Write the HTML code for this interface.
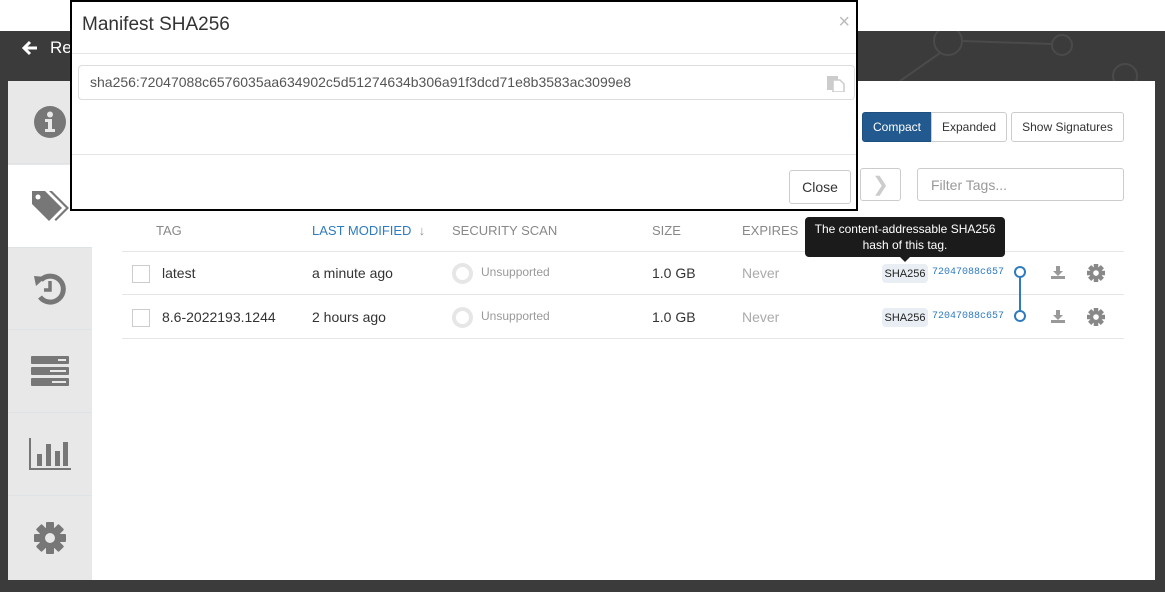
<!DOCTYPE html>
<html><head><style>
*{box-sizing:border-box;margin:0;padding:0}
body{width:1165px;height:592px;overflow:hidden;position:relative;background:#fff;font-family:"Liberation Sans",sans-serif;color:#333}
.abs{position:absolute}
.dark{left:0;top:31px;width:1165px;height:561px;background:#3b3b3b}
.panel{left:8px;top:81px;width:1147px;height:499px;background:#fff}
.side{left:8px;top:81px;width:84px;height:499px;background:#e8e8e8}
.tab{position:absolute;left:0;width:84px;height:83px;border-bottom:1px solid #dfe3e6;display:flex;align-items:center;justify-content:center}
.btn{position:absolute;border:1px solid #ccc;border-radius:3px;background:#fff;font-size:12px;display:flex;align-items:center;justify-content:center;color:#333}
.th{position:absolute;top:223px;font-size:13px;color:#888}
.row{position:absolute;font-size:14px}
.cb{position:absolute;width:18px;height:18px;border:1px solid #ccc;background:#fff}
.line{position:absolute;left:122px;width:1002px;height:1px;background:#e6e6e6}
.sha{position:absolute;left:882px;width:46px;height:19px;background:#e8eef3;border-radius:4px;font-size:11px;display:flex;align-items:center;justify-content:center;color:#222}
.hash{position:absolute;left:932px;font-family:"Liberation Mono",monospace;font-size:10px;color:#2f7bbf}
.scan{position:absolute;left:452px;width:21px;height:21px;border-radius:50%;border:4px solid #e6e6e6}
</style></head><body>
<div class="abs dark"></div>
<svg class="abs" style="left:880px;top:31px" width="285" height="60"><g fill="none" stroke="#4a4a4a" stroke-width="2"><circle cx="68" cy="10" r="14"/><circle cx="182" cy="14" r="10"/><line x1="82" y1="10" x2="172" y2="13"/><line x1="60" y1="22" x2="20" y2="50"/><circle cx="245" cy="45" r="12"/></g></svg>
<svg class="abs" style="left:22px;top:40px" width="16" height="16" viewBox="0 0 16 16"><path d="M8 2 2 8l6 6M2 8h13" stroke="#fff" stroke-width="3" fill="none"/></svg>
<div class="abs" style="left:50px;top:38px;color:#fff;font-size:17px">Re</div>
<div class="abs panel"></div>
<div class="abs side">
 <div class="tab" style="top:0"><svg width="32" height="32" viewBox="0 0 32 32"><circle cx="16" cy="16" r="16" fill="#777"/><circle cx="16" cy="8.5" r="3" fill="#e8e8e8"/><path d="M11 13h7v10h3v3H11v-3h3v-7h-3z" fill="#e8e8e8"/></svg></div>
 <div class="tab" style="top:84px;background:#fff"><svg width="40" height="34" viewBox="0 0 40 34"><path d="M2 2h13l17 17-13 13L2 15z" fill="#777"/><circle cx="8" cy="8" r="2.5" fill="#fff"/><path d="M19 2h3l17 17-13 13-1.5-1.5 11.5-11.5z" fill="#777"/></svg></div>
 <div class="tab" style="top:166px"><svg width="34" height="34" viewBox="0 0 34 34"><path d="M8 9A13 13 0 1 1 7 26" stroke="#777" stroke-width="5" fill="none"/><path d="M1 5l12 1-10 9z" fill="#777"/><path d="M17 10v9h-6" stroke="#777" stroke-width="3.5" fill="none"/></svg></div>
 <div class="tab" style="top:249px"><svg width="38" height="30" viewBox="0 0 38 30"><rect x="0" y="0" width="38" height="8" rx="1" fill="#777"/><rect x="0" y="11" width="38" height="8" rx="1" fill="#777"/><rect x="0" y="22" width="38" height="8" rx="1" fill="#777"/><rect x="27" y="3" width="8" height="2" fill="#e8e8e8"/><rect x="19" y="14" width="16" height="2" fill="#e8e8e8"/><rect x="21" y="25" width="14" height="2" fill="#e8e8e8"/></svg></div>
 <div class="tab" style="top:332px"><svg width="42" height="32" viewBox="0 0 42 32"><path d="M1 0v31h41" stroke="#777" stroke-width="2" fill="none"/><rect x="8" y="16" width="5" height="12" fill="#777"/><rect x="17" y="6" width="5" height="22" fill="#777"/><rect x="26" y="13" width="5" height="15" fill="#777"/><rect x="34" y="4" width="5" height="24" fill="#777"/></svg></div>
 <div class="tab" style="top:415px;border:none"><svg width="32" height="32" viewBox="-16 -16 32 32"><g fill="#777"><circle r="11"/><rect x="-4" y="-16" width="8" height="32" rx="1"/><rect x="-4" y="-16" width="8" height="32" rx="1" transform="rotate(45)"/><rect x="-4" y="-16" width="8" height="32" rx="1" transform="rotate(90)"/><rect x="-4" y="-16" width="8" height="32" rx="1" transform="rotate(135)"/></g><circle r="5" fill="#e8e8e8"/></svg></div>
</div>
<div class="btn" style="left:862px;top:112px;width:70px;height:30px;background:#22598f;border-color:#1d4f80;color:#fff;border-radius:3px 0 0 3px">Compact</div>
<div class="btn" style="left:931px;top:112px;width:76px;height:30px;border-radius:0 3px 3px 0">Expanded</div>
<div class="btn" style="left:1011px;top:112px;width:113px;height:30px">Show Signatures</div>
<div class="btn" style="left:860px;top:168px;width:41px;height:33px;color:#ccc;font-size:20px">&#x276F;</div>
<div class="btn" style="left:917px;top:168px;width:207px;height:33px;justify-content:flex-start;padding-left:13px;color:#999;font-size:14px">Filter Tags...</div>
<div class="th" style="left:156px">TAG</div>
<div class="th" style="left:312px;color:#2f7bbf">LAST MODIFIED &nbsp;<span style="color:#999">↓</span></div>
<div class="th" style="left:452px">SECURITY SCAN</div>
<div class="th" style="left:652px">SIZE</div>
<div class="th" style="left:742px">EXPIRES</div>
<div class="line" style="top:251px"></div>
<div class="line" style="top:294px"></div>
<div class="line" style="top:338px"></div>
<div class="cb" style="left:132px;top:265px"></div>
<div class="cb" style="left:132px;top:309px"></div>
<div class="row" style="left:162px;top:265px">latest</div>
<div class="row" style="left:162px;top:309px">8.6-2022193.1244</div>
<div class="row" style="left:312px;top:265px">a minute ago</div>
<div class="row" style="left:312px;top:309px">2 hours ago</div>
<div class="scan" style="top:263px"></div><div class="scan" style="top:307px"></div>
<div class="row" style="left:481px;top:265px;font-size:12px;color:#999">Unsupported</div>
<div class="row" style="left:481px;top:309px;font-size:12px;color:#999">Unsupported</div>
<div class="row" style="left:652px;top:265px">1.0 GB</div>
<div class="row" style="left:652px;top:309px">1.0 GB</div>
<div class="row" style="left:742px;top:265px;color:#aaa">Never</div>
<div class="row" style="left:742px;top:309px;color:#aaa">Never</div>
<div class="sha" style="top:264px">SHA256</div><div class="sha" style="top:308px">SHA256</div>
<div class="hash" style="top:267px">72047088c657</div><div class="hash" style="top:311px">72047088c657</div>
<svg class="abs" style="left:1010px;top:264px" width="20" height="60"><line x1="10" y1="8" x2="10" y2="52" stroke="#2f7bbf" stroke-width="2"/><circle cx="10" cy="8" r="5" fill="#fff" stroke="#2f7bbf" stroke-width="2"/><circle cx="10" cy="52" r="5" fill="#fff" stroke="#2f7bbf" stroke-width="2"/></svg>
<svg class="abs" style="left:1051px;top:265px" width="14" height="14" viewBox="0 0 14 14"><path d="M5 1h4v5h3L7 11 2 6h3z" fill="#999"/><rect x="0" y="11" width="14" height="3" fill="#999"/></svg>
<svg class="abs" style="left:1051px;top:309px" width="14" height="14" viewBox="0 0 14 14"><path d="M5 1h4v5h3L7 11 2 6h3z" fill="#999"/><rect x="0" y="11" width="14" height="3" fill="#999"/></svg>
<svg class="abs" style="left:1087px;top:264px" width="18" height="18" viewBox="-16 -16 32 32"><g fill="#888"><circle r="11"/><rect x="-4" y="-16" width="8" height="32"/><rect x="-4" y="-16" width="8" height="32" transform="rotate(45)"/><rect x="-4" y="-16" width="8" height="32" transform="rotate(90)"/><rect x="-4" y="-16" width="8" height="32" transform="rotate(135)"/></g><circle r="5" fill="#fff"/></svg>
<svg class="abs" style="left:1087px;top:308px" width="18" height="18" viewBox="-16 -16 32 32"><g fill="#888"><circle r="11"/><rect x="-4" y="-16" width="8" height="32"/><rect x="-4" y="-16" width="8" height="32" transform="rotate(45)"/><rect x="-4" y="-16" width="8" height="32" transform="rotate(90)"/><rect x="-4" y="-16" width="8" height="32" transform="rotate(135)"/></g><circle r="5" fill="#fff"/></svg>
<div class="abs" style="left:805px;top:217px;width:200px;height:40px;background:#1b1b1b;border-radius:4px;color:#fff;font-size:12px;text-align:center;line-height:16px;padding-top:4px">The content-addressable SHA256<br>hash of this tag.</div>
<div class="abs" style="left:900px;top:257px;border:5px solid transparent;border-top-color:#1b1b1b;border-bottom:0"></div>
<div class="abs" style="left:70px;top:0;width:788px;height:211px;background:#fff;border:2px solid #000">
 <div class="abs" style="left:10px;top:12px;font-size:19px;color:#333">Manifest SHA256</div>
 <div class="abs" style="right:6px;top:9px;font-size:20px;color:#bbb">×</div>
 <div class="abs" style="left:0;top:51px;width:784px;height:1px;background:#e5e5e5"></div>
 <div class="abs" style="left:6px;top:63px;width:777px;height:35px;border:1px solid #ddd;border-radius:4px;font-size:14px;color:#555;padding:8px 0 0 11px">sha256:72047088c6576035aa634902c5d51274634b306a91f3dcd71e8b3583ac3099e8</div>
 <svg class="abs" style="left:755px;top:73px" width="18" height="17" viewBox="0 0 18 17"><rect x="0" y="1" width="11" height="14" fill="#ccc"/><path d="M6 5h7l4 4v8H6z" fill="#fff" stroke="#ccc" stroke-width="1.5"/></svg>
 <div class="abs" style="left:0;top:152px;width:784px;height:1px;background:#e5e5e5"></div>
 <div class="btn" style="left:717px;top:168px;width:62px;height:34px;font-size:14px">Close</div>
</div>
</body></html>
